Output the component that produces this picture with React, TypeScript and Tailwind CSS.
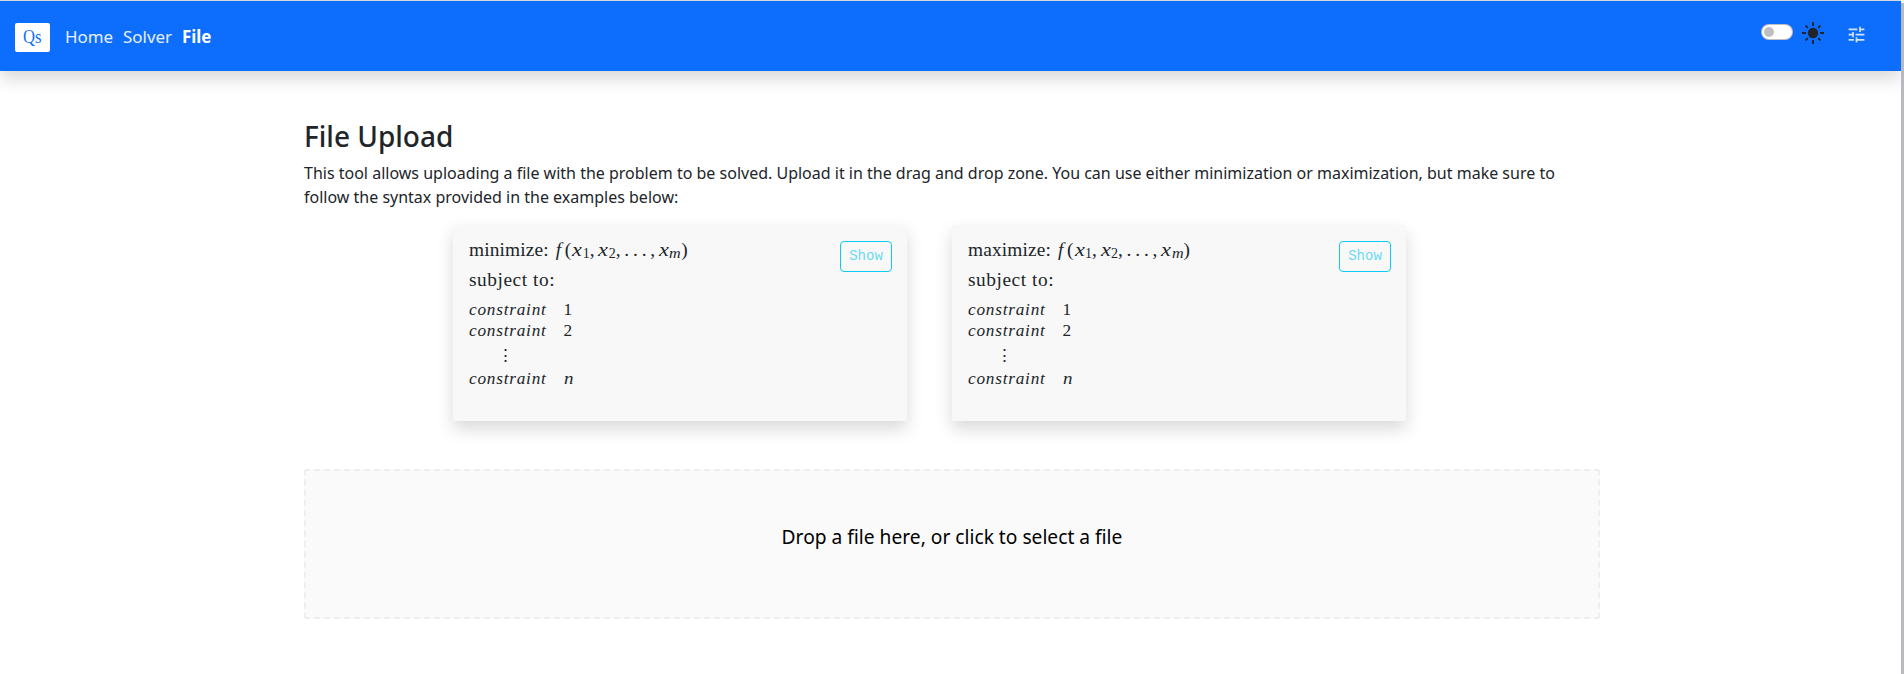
import React from "react";
import { MdTune } from "react-icons/md";

const MATH = "font-['Liberation_Serif',serif]";

function X() {
  return (
    <span className="w-[10.5px]">
      <span className="inline-block origin-left scale-x-115 italic">x</span>
    </span>
  );
}

function Formula() {
  return (
    <span className="flex">
      <span className="w-[11px] pl-[2px] italic">f</span>
      <span className="w-[7.5px]">(</span>
      <X />
      <span className="relative top-[4px] w-[7px] text-[14px]">1</span>
      <span className="w-[8.5px]">,</span>
      <X />
      <span className="relative top-[4px] w-[7px] text-[14px]">2</span>
      <span className="w-[8.5px]">,</span>
      <span className="w-[26px] tracking-[3.9px]">...</span>
      <span className="w-[8.5px]">,</span>
      <X />
      <span className="relative top-[4px] w-[12px] text-[14px]">
        <span className="inline-block origin-left scale-x-115 italic">m</span>
      </span>
      <span>)</span>
    </span>
  );
}

function Row({ value, italic }: { value: string; italic?: boolean }) {
  return (
    <div className="flex h-[21px] items-center leading-[21px]">
      <span className="w-[94.5px] tracking-[0.75px] italic">constraint</span>
      <span className={italic ? "inline-block origin-left scale-x-110 italic" : ""}>{value}</span>
    </div>
  );
}

function ExampleCard({ goal }: { goal: string }) {
  return (
    <section className="flex h-[196px] w-[454px] items-start justify-between bg-[#f8f8f8] pt-4 pr-[15px] pl-4 shadow-[0_8px_16px_rgba(0,0,0,0.15)]">
      <div className={`${MATH} text-[17.3px] text-[#212529]`}>
        <div className="flex h-[18px] text-[19.36px] leading-[18px]">
          <span className="mr-[5px] tracking-[0.15px]">{goal}:</span>
          <Formula />
        </div>
        <div className="mt-[12px] h-[18px] text-[19.36px] leading-[18px] tracking-[0.55px]">subject to:</div>
        <div className="mt-[10px]">
          <Row value="1" />
          <Row value="2" />
          <div className="flex h-[27px] items-center pt-[3px] pl-[28px]">⋮</div>
          <Row value="n" italic />
        </div>
      </div>
      <button className="h-[31px] w-[52px] rounded-[4px] border border-[#0dcaf0] font-['Liberation_Mono',monospace] text-[14px] text-[#0dcaf0]/65">
        Show
      </button>
    </section>
  );
}

function Sun() {
  return (
    <svg viewBox="-11 -11 22 22" className="mb-[7px] ml-[9px] size-[22px] text-[#212529]">
      <circle r="5.2" fill="currentColor" />
      <path
        d="M0-11v4M0 7v4M-11 0h4M7 0h4M-7.4-7.4l2.2 2.2M5.2 5.2l2.2 2.2M-7.4 7.4l2.2-2.2M5.2-5.2l2.2-2.2"
        stroke="currentColor"
        strokeWidth="1.9"
      />
    </svg>
  );
}

export default function App() {
  return (
    <div className="flex h-[674px] overflow-hidden bg-white font-['Noto_Sans',sans-serif] text-[#212529]">
      <div className="flex min-w-0 flex-1 flex-col border-t border-[#dadbdf]">
        <header className="flex h-[70px] shrink-0 items-center bg-[#0d6efd] pr-[34px] pl-[15px] shadow-[0_8px_16px_rgba(0,0,0,0.15)]">
          <a className="mt-[3px] flex h-[29px] w-[35px] items-center justify-center rounded-[2px] bg-white font-['Liberation_Serif',serif] text-[18.5px] text-[#0d6efd]">
            <span className="inline-block scale-x-90">Qs</span>
          </a>
          <nav className="mt-[2px] ml-[15px] flex gap-[10px] text-[16.9px] text-white">
            <a className="text-white/90">Home</a>
            <a className="text-white/90">Solver</a>
            <a className="font-bold">File</a>
          </nav>
          <div className="mb-[8px] ml-auto flex h-4 w-8 items-center rounded-full border border-black/25 bg-white pl-[2px]">
            <span className="size-[10px] rounded-full bg-[#bfbfbf]" />
          </div>
          <Sun />
          <MdTune className="mb-[3px] ml-[22px] size-[21px] text-white/80" />
        </header>
        <main className="ml-[304px] w-[1296px] pt-[48px]">
          <h1 className="text-[28px] leading-[34px] font-medium">File Upload</h1>
          <p className="mt-2 text-base leading-6">
            This tool allows uploading a file with the problem to be solved. Upload it in the drag and drop zone. You can
            use either minimization or maximization, but make sure to follow the syntax provided in the examples below:
          </p>
          <div className="mt-4 flex gap-[45px] pl-[149px]">
            <ExampleCard goal="minimize" />
            <ExampleCard goal="maximize" />
          </div>
          <div className="mt-12 flex h-[150px] items-center justify-center rounded-[2px] border-2 border-dashed border-[#eeeeee] bg-[#fafafa] pb-[14px] text-[19.2px] text-black">
            Drop a file here, or click to select a file
          </div>
        </main>
      </div>
      <div className="mt-[3px] w-[3px] bg-[#b9b9c0]" />
    </div>
  );
}
